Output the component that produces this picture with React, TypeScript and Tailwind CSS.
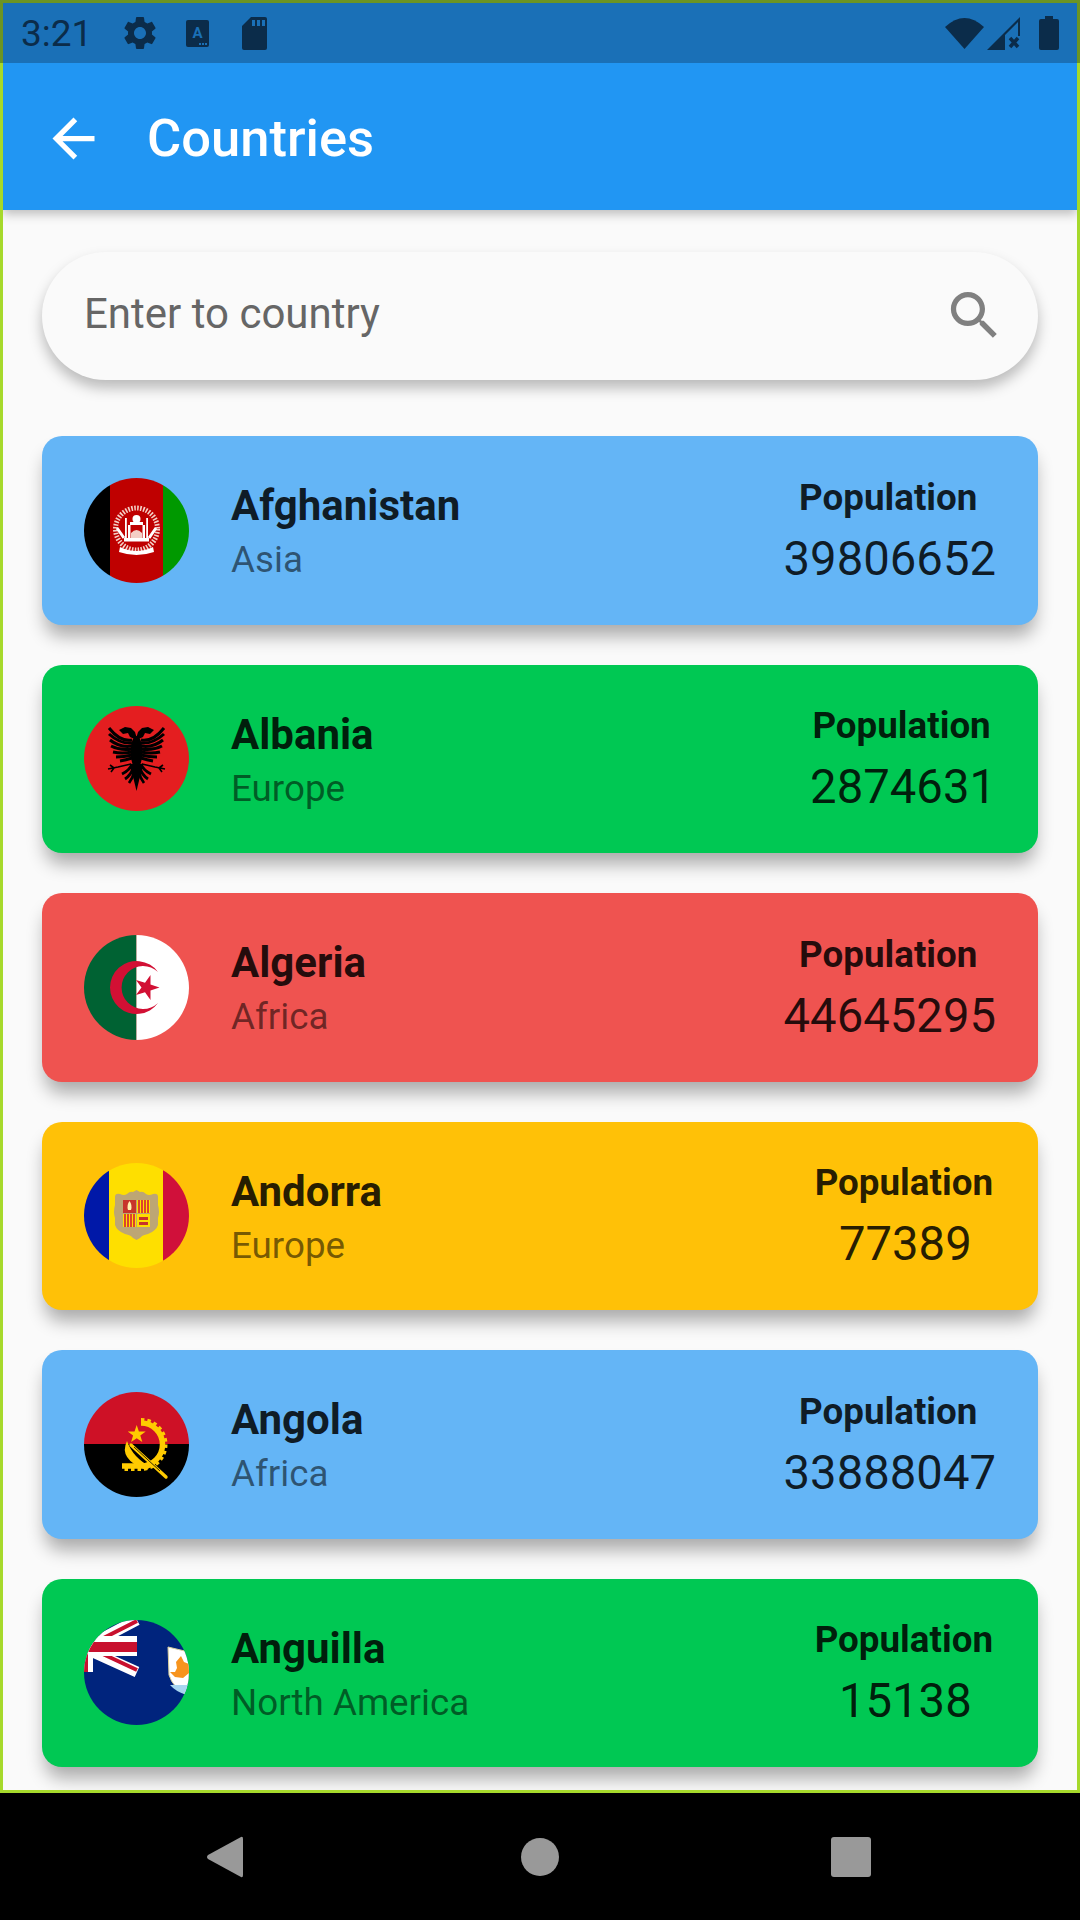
import { ReactNode } from "react";

const ink = "#0b2c4a";
const sbBlue = "#1a70b7";

const eagleWing = [
  "M48 34Q36 36 25 22",
  "M48 37Q36 38 25 28",
  "M48 40Q36 42 26 34",
  "M48 43Q37 45 27 40",
  "M48 46Q38 48 29 46",
  "M48 49Q40 51 32 51",
  "M48 52Q42 54 36 55",
];

const eagleLower = ["M48 58Q46 64 38 68", "M49 62Q47 69 41 73", "M50 66Q49 72 45 77"];

function EagleSide() {
  return (
    <g>
      {eagleWing.map((d) => (
        <path key={d} d={d} fill="none" stroke="#000000" strokeWidth="3" />
      ))}
      {eagleLower.map((d) => (
        <path key={d} d={d} fill="none" stroke="#000000" strokeWidth="2.800" />
      ))}
      <path d="M47 58L34 61L24 63M30 62L26 59M30 62L27 66" fill="none" stroke="#000000" strokeWidth="1.600" />
      <path d="M52.500 34L46 31L44 27L39 28L35 24L41 21L47 22L51 26L52.500 31z" fill="#000000" />
    </g>
  );
}

function AfghanistanFlag() {
  return (
    <svg viewBox="0 0 105 105" className="h-[105px] w-[105px] shrink-0 rounded-full">
      <rect width="26" height="105" fill="#000000" />
      <rect x="26" width="53" height="105" fill="#bf0000" />
      <rect x="79" width="26" height="105" fill="#009900" />
      {/* emblem */}
      <circle cx="52.500" cy="51" r="21" fill="none" stroke="#f4cfc6" strokeWidth="5" strokeDasharray="1.600 1.400" />
      <path d="M36 69q16.500 8 33 0l1 5q-17.500 6-35 0z" fill="#ffffff" />
      <circle cx="52.500" cy="41" r="4" fill="#ffffff" />
      <rect x="46" y="44" width="13" height="3" fill="#ffffff" />
      <rect x="44" y="47" width="2.500" height="13" fill="#ffffff" />
      <rect x="58.500" y="47" width="2.500" height="13" fill="#ffffff" />
      <rect x="41" y="40" width="1.800" height="20" fill="#ffffff" />
      <rect x="62.200" y="40" width="1.800" height="20" fill="#ffffff" />
      <path d="M47 60v-5q5.500-6 11 0v5z" fill="#f4cfc6" />
      <rect x="40" y="60" width="25" height="3.500" fill="#ffffff" />
      <path d="M33 50l7 10M72 50l-7 10" stroke="#ffffff" strokeWidth="3" />
    </svg>
  );
}

function AlbaniaFlag() {
  return (
    <svg viewBox="0 0 105 105" className="h-[105px] w-[105px] shrink-0 rounded-full">
      <rect width="105" height="105" fill="#e41e20" />
      <EagleSide />
      <g transform="translate(105 0) scale(-1 1)">
        <EagleSide />
      </g>
      <ellipse cx="52.500" cy="46" rx="6" ry="16" fill="#000000" />
      <path d="M46 58H59L52.500 85z" fill="#000000" />
    </svg>
  );
}

function AlgeriaFlag() {
  return (
    <svg viewBox="0 0 105 105" className="h-[105px] w-[105px] shrink-0 rounded-full">
      <rect width="52.500" height="105" fill="#006233" />
      <rect x="52.500" width="52.500" height="105" fill="#ffffff" />
      <path d="M74 37A26.500 26.500 0 1 0 74 68A21.500 21.500 0 1 1 74 37z" fill="#d21034" />
      <path
        d="M75.500 52.500L66.500 55.400L66.500 64.900L61 57.300L52 60.100L57.500 52.500L52 44.900L61 47.700L66.500 40.100L66.500 49.600z"
        fill="#d21034"
      />
    </svg>
  );
}

function AndorraFlag() {
  return (
    <svg viewBox="0 0 105 105" className="h-[105px] w-[105px] shrink-0 rounded-full">
      <rect width="25" height="105" fill="#0018a8" />
      <rect x="25" width="54" height="105" fill="#fedf00" />
      <rect x="79" width="26" height="105" fill="#d0103a" />
      <path
        d="M31 34Q31 30 36 31Q40 33 43 31Q46 28 49 29L52.500 27L56 29Q59 28 62 31Q65 33 69 31Q74 30 74 34L74 42Q76 49 74 55L74 62Q72 68 64 71Q58 72 56 75L52.500 77L49 75Q47 72 41 71Q33 68 31 62L31 55Q29 49 31 42z"
        fill="#bda674"
      />
      <rect x="39" y="37" width="13" height="13" fill="#c7352b" />
      <rect x="53" y="37" width="13" height="13" fill="#fedf00" />
      <rect x="39" y="51" width="13" height="13" fill="#fedf00" />
      <rect x="53" y="51" width="13" height="13" fill="#fedf00" />
      <path d="M55 37v13M58 37v13M61 37v13M64 37v13M41 51v13M44 51v13M47 51v13M50 51v13" stroke="#d0103a" strokeWidth="1.500" />
      <path d="M45.500 38q3 4 1.500 9h-3q-1.500-5 1.500-9z" fill="#fff2b0" />
      <path d="M55 54h9v3h-9zM55 59h9v3h-9z" fill="#c7352b" />
    </svg>
  );
}

function AngolaFlag() {
  return (
    <svg viewBox="0 0 105 105" className="h-[105px] w-[105px] shrink-0 rounded-full">
      <rect width="105" height="52" fill="#ce1126" />
      <rect y="52" width="105" height="53" fill="#000000" />
      <path d="M57 31A21.500 21.500 0 0 1 57 74H38" fill="none" stroke="#ffcb00" strokeWidth="5.500" />
      <path
        d="M57 27.500A25 25 0 0 1 57 77.500H38"
        fill="none"
        stroke="#ffcb00"
        strokeWidth="3"
        strokeDasharray="3.500 3"
      />
      <path d="M43 49Q34 67 62 78L67 75Q49 66 43 49z" fill="#ffcb00" />
      <path d="M47 53L82 85" stroke="#ffcb00" strokeWidth="3.400" strokeLinecap="round" />
      <path d="M50 55L76 79" stroke="#000000" strokeWidth="0.800" />
      <path
        d="M52.700 33l2.200 6.400 6.800.1-5.400 4.100 2 6.500-5.600-3.900-5.600 3.900 2-6.500-5.400-4.100 6.800-.1z"
        fill="#ffcb00"
      />
    </svg>
  );
}

function AnguillaFlag() {
  return (
    <svg viewBox="0 0 105 105" className="h-[105px] w-[105px] shrink-0 rounded-full">
      <rect width="105" height="105" fill="#00247d" />
      <path d="M0 28L53 0M0 28L53 52" stroke="#ffffff" strokeWidth="11" />
      <path d="M0 28L53 1M6 28L53 50" stroke="#c8102e" strokeWidth="4" />
      <rect x="0" y="0" width="9" height="52" fill="#ffffff" />
      <rect x="0" y="16" width="53" height="20" fill="#ffffff" />
      <rect x="0" y="0" width="4" height="52" fill="#c8102e" />
      <rect x="0" y="22" width="53" height="10" fill="#c8102e" />
      <path d="M84 27l21 5v43l-2 0q-14-7-18-20z" fill="#ffffff" stroke="#d9cf9c" strokeWidth="1" />
      <path d="M86 65h19v10h-2q-11-3-17-10z" fill="#a8d6f0" />
      <path d="M97 36l3 6 5 2v9l-6 5-8-1-5-5 5 0 2-4-1-6z" fill="#f7941d" />
    </svg>
  );
}

type Country = {
  name: string;
  region: string;
  population: number;
  color: string;
  flag: ReactNode;
};

const countries: Country[] = [
  { name: "Afghanistan", region: "Asia", population: 39806652, color: "bg-[#64b5f6]", flag: <AfghanistanFlag /> },
  { name: "Albania", region: "Europe", population: 2874631, color: "bg-[#00c853]", flag: <AlbaniaFlag /> },
  { name: "Algeria", region: "Africa", population: 44645295, color: "bg-[#ef5350]", flag: <AlgeriaFlag /> },
  { name: "Andorra", region: "Europe", population: 77389, color: "bg-[#ffc107]", flag: <AndorraFlag /> },
  { name: "Angola", region: "Africa", population: 33888047, color: "bg-[#64b5f6]", flag: <AngolaFlag /> },
  { name: "Anguilla", region: "North America", population: 15138, color: "bg-[#00c853]", flag: <AnguillaFlag /> },
];

function CountryCard({ country }: { country: Country }) {
  return (
    <div
      className={`flex h-[188.5px] items-center rounded-[20px] pl-[42px] pr-[42px] shadow-[0_14px_18px_-3px_rgba(0,0,0,0.32)] ${country.color}`}
    >
      {country.flag}
      <div className="ml-[42px] flex flex-col pt-[3px]">
        <span className="text-[42px] leading-[54px] font-bold text-black/85">{country.name}</span>
        <span className="mt-[3px] text-[36.75px] leading-[48px] text-black/55">{country.region}</span>
      </div>
      <div className="ml-auto flex flex-col items-center">
        <span className="pr-[3px] text-[36.75px] leading-[48px] font-bold text-black/85">Population</span>
        <span className="mt-[9px] text-[47.25px] leading-[56px] text-black/85">{country.population}</span>
      </div>
    </div>
  );
}

export default function App() {
  return (
    <div className="flex h-[1920px] w-[1080px] flex-col bg-black font-['Roboto',sans-serif]">
      {/* status bar */}
      <div className="flex h-[63px] shrink-0 items-center border-x-[3px] border-t-[3px] border-[#6b9423] bg-[#1a70b7] pl-[18px] pr-[18px]" style={{ color: ink }}>
        <span className="text-[37px] leading-none">3:21</span>
        <svg viewBox="0 0 24 24" className="ml-[28px] h-[40px] w-[40px]" fill={ink}>
          <path d="M19.140 12.940c.04-.3.06-.61.06-.94 0-.32-.02-.64-.07-.94l2.030-1.580c.18-.14.23-.41.12-.61l-1.920-3.320c-.12-.22-.37-.29-.59-.22l-2.390.96c-.5-.38-1.030-.7-1.620-.94l-.36-2.540c-.04-.24-.24-.41-.48-.41h-3.840c-.24 0-.43.17-.47.41l-.36 2.540c-.59.24-1.130.57-1.620.94l-2.390-.96c-.22-.08-.47 0-.59.22L2.740 8.870c-.12.21-.08.47.12.61l2.030 1.580c-.05.3-.09.63-.09.94s.02.64.07.94l-2.030 1.580c-.18.14-.23.41-.12.61l1.920 3.320c.12.22.37.29.59.22l2.390-.96c.5.38 1.030.7 1.620.94l.36 2.540c.05.24.24.41.48.41h3.840c.24 0 .44-.17.47-.41l.36-2.540c.59-.24 1.130-.56 1.620-.94l2.390.96c.22.08.47 0 .59-.22l1.920-3.320c.12-.22.07-.47-.12-.61l-2.010-1.580zM12 15.600c-1.980 0-3.600-1.620-3.600-3.600s1.620-3.600 3.600-3.600 3.600 1.620 3.600 3.600-1.620 3.600-3.600 3.600z" />
        </svg>
        <svg viewBox="0 0 23 27" className="ml-[26px] h-[27px] w-[23px]">
          <rect width="23" height="27" rx="2" fill={ink} />
          <text x="11.500" y="18" textAnchor="middle" fontSize="15" fontWeight="700" fill={sbBlue} fontFamily="Roboto">A</text>
          <path d="M13 23h2v2h-2zM16 23h2v2h-2zM19 23h2v2h-2z" fill={sbBlue} />
        </svg>
        <svg viewBox="0 0 25 33" className="ml-[33px] h-[33px] w-[25px]">
          <path d="M9 0h14a2 2 0 0 1 2 2v29a2 2 0 0 1-2 2H2a2 2 0 0 1-2-2V9z" fill={ink} />
          <path d="M10 3h3v6h-3zM15 3h3v6h-3zM20 3h3v6h-3z" fill={sbBlue} />
        </svg>
        <svg viewBox="0 0 39 32" className="ml-auto h-[32px] w-[39px]">
          <path d="M0 10Q19.500-8 39 10L19.500 32z" fill={ink} />
        </svg>
        <svg viewBox="0 0 33 33" className="ml-[3px] h-[33px] w-[33px]">
          <path d="M33 0V19H31V5L18 18V33H0z" fill={ink} />
          <path d="M23 21l8 9M31 21l-8 9" stroke={ink} strokeWidth="3.500" />
        </svg>
        <svg viewBox="0 0 20 34" className="ml-[19px] h-[34px] w-[20px]">
          <path d="M6 0h8v3h4a2 2 0 0 1 2 2v27a2 2 0 0 1-2 2H2a2 2 0 0 1-2-2V5a2 2 0 0 1 2-2h4z" fill={ink} />
        </svg>
      </div>

      {/* device frame */}
      <div className="flex h-[1730px] shrink-0 flex-col overflow-hidden border-x-[3px] border-b-[3px] border-[#a6d92b] bg-[#fafafa]">
        <header className="z-10 flex h-[147px] shrink-0 items-center bg-[#2196f3] pl-[39px] shadow-[0_4px_10px_rgba(0,0,0,0.25)]">
          <svg viewBox="0 0 24 24" className="mt-[3px] h-[63px] w-[63px]" fill="#ffffff">
            <path d="M20 11H7.830l5.590-5.590L12 4l-8 8 8 8 1.410-1.410L7.830 13H20v-2z" />
          </svg>
          <h1 className="ml-[42px] mt-[3px] text-[52.5px] leading-none font-medium text-white">Countries</h1>
        </header>

        <main className="flex flex-col px-[39px] pt-[42px]">
          <div className="flex h-[128px] items-center justify-between rounded-full bg-[#fafafa] pl-[42px] pr-[32px] shadow-[0_8px_14px_rgba(0,0,0,0.26)]">
            <span className="mb-[5px] text-[42px] leading-none text-[#666666]">Enter to country</span>
            <svg viewBox="0 0 24 24" className="mb-[2px] h-[63px] w-[63px]" fill="#808080">
              <path d="M15.500 14h-.79l-.28-.27C15.410 12.590 16 11.110 16 9.500 16 5.910 13.090 3 9.500 3S3 5.910 3 9.500 5.910 16 9.500 16c1.610 0 3.090-.59 4.230-1.570l.27.28v.79l5 4.990L20.490 19l-4.990-5zm-6 0C7.010 14 5 11.990 5 9.500S7.010 5 9.500 5 14 7.010 14 9.500 11.990 14 9.500 14z" />
            </svg>
          </div>

          <div className="mt-[56px] flex flex-col gap-[40px]">
            {countries.map((c) => (
              <CountryCard key={c.name} country={c} />
            ))}
          </div>
        </main>
      </div>

      {/* navigation bar */}
      <nav className="relative flex flex-1 items-center bg-black">
        <svg viewBox="0 0 36 42" className="ml-[207px] h-[42px] w-[36px]">
          <path d="M34 1Q36 0 36 3V39Q36 42 34 41L1 23Q-1 21 1 19z" fill="#999999" />
        </svg>
        <div className="ml-[278px] h-[38px] w-[38px] rounded-full bg-[#999999]" />
        <div className="ml-[272px] h-[40px] w-[40px] rounded-[3px] bg-[#999999]" />
      </nav>
    </div>
  );
}
